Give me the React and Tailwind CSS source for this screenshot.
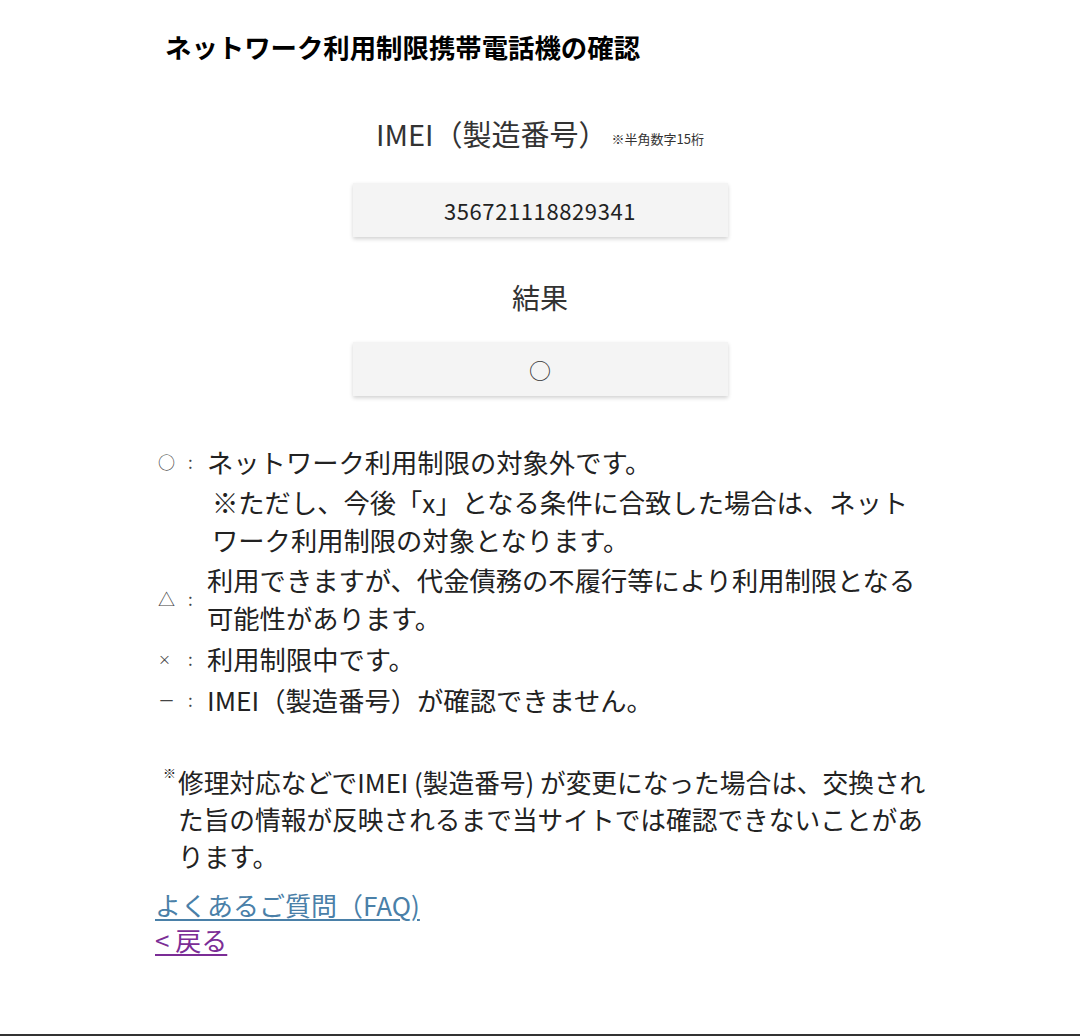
import React from 'react';

const jp = { fontFamily: '"Noto Sans CJK JP", "Noto Sans", sans-serif' };

function ValueBox({ children, className = '' }) {
  return (
    <div
      className={`mx-auto flex h-[54px] w-[375px] items-center justify-center bg-[#f4f4f4] shadow-[0_2px_4px_rgba(0,0,0,0.18)] ${className}`}
    >
      {children}
    </div>
  );
}

function LegendRow({ mark, markClass = 'text-[17px]', children, className = '' }) {
  return (
    <div className={`flex items-center ${className}`}>
      <div className="flex w-[52px] shrink-0 items-center pl-[3px] text-[#444]">
        <span className={`w-[30px] ${markClass}`}>{mark}</span>
        <span className="text-[17px]">:</span>
      </div>
      <div className="flex-1 whitespace-nowrap">{children}</div>
    </div>
  );
}

export default function App() {
  return (
    <div className="flex h-[1036px] flex-col bg-white text-[#222]" style={jp}>
      <div className="mx-auto w-[770px] flex-1">
        <h1 className="pl-[10px] pt-[29px] text-[26.4px] font-bold leading-[36px] text-black">
          ネットワーク利用制限携帯電話機の確認
        </h1>

        <div className="mt-[48px] flex items-end justify-center text-[#333]">
          <span className="text-[29px] leading-[40px]">IMEI（製造番号）</span>
          <span className="mb-[7px] ml-[4px] text-[13px] leading-[14px]">※半角数字15桁</span>
        </div>

        <ValueBox className="mt-[30px]">
          <span className="text-[22px] tracking-[0.6px] text-[#222]">356721118829341</span>
        </ValueBox>

        <div className="mt-[40px] text-center text-[28px] leading-[40px] text-[#333]">結果</div>

        <ValueBox className="mt-[25px]">
          <span className="text-[22px] text-[#333]">○</span>
        </ValueBox>

        <div className="mt-[48px] text-[26.3px] leading-[35px]">
          <LegendRow mark="○">ネットワーク利用制限の対象外です。</LegendRow>
          <div className="mt-[4px] whitespace-nowrap pl-[57px] leading-[38px]">
            ※ただし、今後「x」となる条件に合致した場合は、ネット
            <br />
            ワーク利用制限の対象となります。
          </div>
          <LegendRow mark="△" className="mt-[2px] leading-[38px]">
            利用できますが、代金債務の不履行等により利用制限となる
            <br />
            可能性があります。
          </LegendRow>
          <LegendRow mark="×" markClass="text-[13px]" className="mt-[4px]">
            利用制限中です。
          </LegendRow>
          <LegendRow mark="－" className="mt-[6px]">IMEI（製造番号）が確認できません。</LegendRow>
        </div>

        <div className="mt-[46px] flex pl-[8px] text-[25.7px] leading-[37px]">
          <span className="w-[15px] shrink-0 text-[13px] leading-[20px]">※</span>
          <p className="whitespace-nowrap">
            修理対応などでIMEI (製造番号) が変更になった場合は、交換され
            <br />
            た旨の情報が反映されるまで当サイトでは確認できないことがあ
            <br />
            ります。
          </p>
        </div>

        <div className="mt-[13px] flex flex-col items-start text-[26px] leading-[35px]">
          <a href="#" className="text-[#4a80a8] underline underline-offset-[3px]">
            よくあるご質問（FAQ)
          </a>
          <a href="#" className="text-[#7b2d96] underline underline-offset-[3px]">
            &lt; 戻る
          </a>
        </div>
      </div>
      <div className="h-[2px] bg-[#333]" />
    </div>
  );
}
